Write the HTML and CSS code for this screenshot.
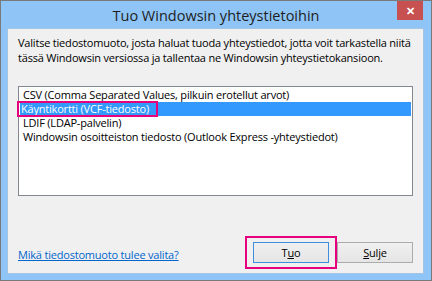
FILE: index.html
```html
<!DOCTYPE html>
<html lang="fi">
<head>
    <meta charset="UTF-8">
    <title>Tuo Windowsin yhteystietoihin</title>
    <link rel="stylesheet" href="styles.css">
</head>
<body>
    <div class="window">
        <div class="titlebar">
            <span class="title">Tuo Windowsin yhteystietoihin</span>
            <span class="close-btn">&#x2715;</span>
        </div>
        <div class="client">
            <p class="intro">Valitse tiedostomuoto, josta haluat tuoda yhteystiedot, jotta voit tarkastella niitä tässä Windowsin versiossa ja tallentaa ne Windowsin yhteystietokansioon.</p>
            <ul class="listbox">
                <li>CSV (Comma Separated Values, pilkuin erotellut arvot)</li>
                <li class="selected"><span class="highlight">Käyntikortti (VCF-tiedosto)</span></li>
                <li>LDIF (LDAP-palvelin)</li>
                <li>Windowsin osoitteiston tiedosto (Outlook Express -yhteystiedot)</li>
            </ul>
            <div class="footer-row">
                <a href="#" class="help-link">Mikä tiedostomuoto tulee valita?</a>
                <div class="buttons">
                    <span class="callout"><button class="btn default">T<u>u</u>o</button></span>
                    <button class="btn"><u>S</u>ulje</button>
                </div>
            </div>
        </div>
    </div>
</body>
</html>
```

FILE: styles.css
```css
body {
    margin: 0;
    font-family: "Open Sans", "Noto Sans", sans-serif;
    font-size: 11px;
    letter-spacing: -0.2px;
    color: #000000;
}
.window {
    width: 432px;
    height: 281px;
    box-sizing: border-box;
    border: 1px solid #7a7a7a;
    background: #8ec5f6;
    display: flex;
    flex-direction: column;
}
.titlebar {
    height: 27px;
    display: flex;
    align-items: center;
    justify-content: center;
    position: relative;
}
.title {
    font-size: 14.5px;
    letter-spacing: 0;
    color: #1e1e1e;
    margin-top: 2px;
}
.close-btn {
    position: absolute;
    right: 8px;
    top: 0;
    width: 26px;
    height: 19px;
    background: #c75050;
    color: #ffffff;
    font-size: 11px;
    font-weight: bold;
    display: flex;
    align-items: center;
    justify-content: center;
}
.client {
    flex: 1;
    margin: 0 7px 6px 6px;
    background: #f0f0f0;
    border: 1px solid #a3c4e2;
    padding: 6px 8px 0 10px;
    display: flex;
    flex-direction: column;
}
.intro {
    margin: 0 -2px 0 0;
    line-height: 15px;
}
.listbox {
    list-style: none;
    margin: 21px 2px 0 0;
    padding: 1px 1px 0 1px;
    height: 107px;
    background: #ffffff;
    border: 1px solid #828790;
}
.listbox li {
    height: 14px;
    line-height: 14px;
    padding-left: 3px;
    white-space: nowrap;
}
.listbox li.selected {
    background: #3399ff;
    color: #ffffff;
    padding-left: 0;
}
.highlight {
    display: inline-block;
    height: 14px;
    padding: 0 8px 0 3px;
    margin-left: -2px;
    outline: 2px solid #e6007e;
    outline-offset: -1px;
}
.footer-row {
    margin: auto 2px 4px 0;
    display: flex;
    align-items: center;
    justify-content: space-between;
}
.help-link {
    color: #0066cc;
    text-decoration: underline;
    margin-top: 4px;
}
.buttons {
    display: flex;
    align-items: center;
    gap: 0;
}
.callout {
    padding: 4px 6px;
    border: 2px solid #e6007e;
    display: flex;
}
.btn {
    width: 76px;
    height: 21px;
    font-family: inherit;
    font-size: 11px;
    letter-spacing: inherit;
    color: #000000;
    background: linear-gradient(#f0f0f0, #e5e5e5);
    border: 1px solid #acacac;
    padding: 0;
}
.btn.default {
    border-color: #3c8fe0;
}
```
